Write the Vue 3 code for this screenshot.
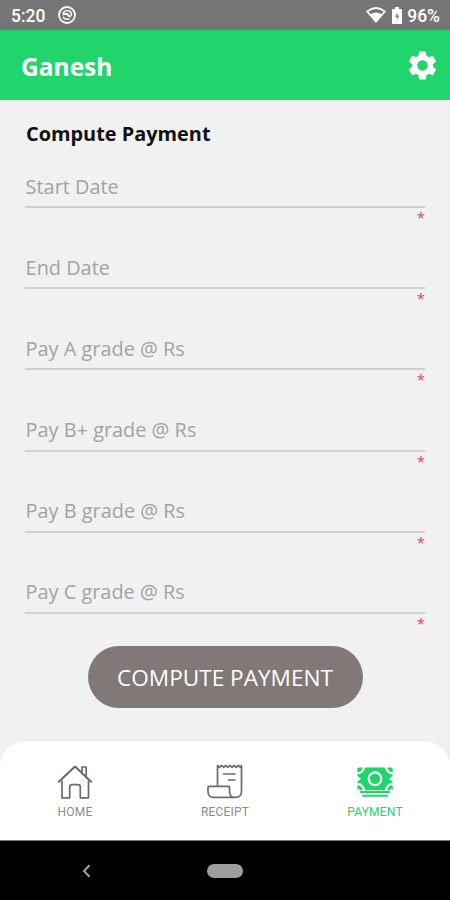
<template>
  <div class="screen">
    <div class="status-bar">
      <span class="clock">5:20</span>
      <svg class="status-app" viewBox="0 0 20 20" fill="none" stroke="#fff">
        <circle cx="10" cy="10" r="8" stroke-width="1.8" />
        <path d="M6 7.800Q8.500 4.800 12 6 15.300 7.600 14.300 11" stroke-width="1.400" />
        <path d="M5.500 9.500Q8.500 8 10.500 9.500L13.500 12" stroke-width="2.200" />
        <path d="M6 12Q8.500 15.300 12.500 13.800" stroke-width="1.400" />
      </svg>
      <svg class="wifi" viewBox="0 0 20 16">
        <path d="M1.200 4.500Q10-2.500 18.800 4.500L10 14.800Z" fill="none" stroke="#fff" stroke-width="1.700" stroke-linejoin="round" />
        <path d="M4.500 7.300Q10 3.500 15.500 7.300L10 14.500Z" fill="#fff" />
      </svg>
      <svg class="battery" viewBox="0 0 10 17">
        <path d="M3 0h4v2h2.200q.8 0 .8.800v13.400q0 .8-.8.800H.8q-.8 0-.8-.8V2.800Q0 2 .8 2H3Z" fill="#fff" />
        <path d="M5.500 5.700 3 9.700h1.800v3.300l2.400-4.200H5.500Z" fill="#757575" />
      </svg>
      <span class="percent">96%</span>
    </div>

    <header class="header">
      <h1>Ganesh</h1>
      <svg class="gear" viewBox="2 2 20 20">
        <path
          fill="#fff"
          d="M19.140 12.940c.04-.3.060-.61.060-.94 0-.32-.02-.64-.07-.94l2.030-1.580c.18-.14.230-.41.120-.61l-1.920-3.320c-.12-.22-.37-.29-.59-.22l-2.390.96c-.5-.38-1.030-.7-1.620-.94l-.36-2.540c-.04-.24-.24-.41-.48-.41h-3.840c-.24 0-.43.170-.47.410l-.36 2.540c-.59.240-1.130.570-1.620.940l-2.390-.96c-.22-.08-.47 0-.59.220L2.740 8.870c-.12.210-.08.470.120.610l2.030 1.580c-.05.300-.09.630-.09.940s.02.640.070.940l-2.030 1.580c-.18.140-.23.410-.12.610l1.920 3.320c.12.220.37.290.59.220l2.390-.96c.5.380 1.030.700 1.620.940l.36 2.540c.05.240.24.410.48.410h3.840c.24 0 .44-.17.470-.41l.36-2.540c.59-.24 1.130-.56 1.620-.94l2.390.96c.22.080.47 0 .59-.22l1.920-3.320c.12-.22.070-.47-.12-.61l-2.010-1.580zM12 15.600c-1.980 0-3.600-1.620-3.600-3.600s1.620-3.600 3.600-3.600 3.600 1.620 3.600 3.600-1.620 3.600-3.600 3.600z"
        />
      </svg>
    </header>

    <main class="content">
      <h2>Compute Payment</h2>
      <div v-for="field in fields" :key="field.key" class="field">
        <input v-model="form[field.key]" type="text" :placeholder="field.label" />
        <span class="required">*</span>
      </div>
      <button class="compute" type="button">COMPUTE PAYMENT</button>
    </main>

    <div class="nav-wrap">
      <nav class="nav">
        <a
          v-for="tab in tabs"
          :key="tab"
          class="tab"
          :class="{ active: tab === activeTab }"
          @click="activeTab = tab"
        >
          <svg v-if="tab === 'HOME'" viewBox="0 0 36 36" fill="none" stroke="currentColor" stroke-width="1.700" stroke-linejoin="round">
            <path d="M5 16.500v17.300h7.700V23q0-2.400 2.400-2.400h5.800q2.400 0 2.400 2.400v10.800h8.200V16.500" />
            <path d="M1.900 17.700 18 2.500l16.100 15.200" stroke-width="2.100" stroke-linecap="round" />
            <path d="M25 8V3h4.200v9.500" />
          </svg>
          <svg v-else-if="tab === 'RECEIPT'" viewBox="0 0 36 36" fill="none" stroke="currentColor" stroke-width="1.700" stroke-linejoin="round">
            <path d="M10.500 22V1.500l2 1.800 2-1.800 2.200 1.800 2-1.800 2.200 1.800 2-1.800 2.200 1.800 2-1.800 2.200 1.800 2-1.800 2.200 1.800 1-1.800V27.500q0 5.800-6 5.800H6.800Q1 33.300 1 27.500v-4.200q0-1 1-1h19.500q1 0 1 1v4.200q0 5.800 5.200 5.800" />
            <path d="M16 10h12.500M21 16h7.500" />
          </svg>
          <svg v-else viewBox="0 0 36 36">
            <rect x=".3" y="3.500" width="35.400" height="22.800" rx="1.500" fill="currentColor" />
            <g fill="none" stroke="#fff" stroke-width="2.200">
              <circle cx="18" cy="14.700" r="6.300" />
              <path d="M7 3A7 7 0 0 1 0 9.500M29 3A7 7 0 0 0 36 9.500M0 19.800a7 7 0 0 1 7 7M36 19.800a7 7 0 0 0-7 7" />
            </g>
            <path d="M0 11.500l4 3.200L0 18ZM36 11.500l-4 3.200L36 18ZM1 26.800v-2.800l2.500 2.800ZM35 26.800v-2.800l-2.500 2.800Z" fill="#fff" />
            <path d="M3.500 28h29M6 31.800h24" stroke="currentColor" stroke-width="1.900" stroke-linecap="round" />
          </svg>
          <span>{{ tab }}</span>
        </a>
      </nav>
    </div>

    <div class="system-bar">
      <svg class="back" viewBox="0 0 9 14">
        <path d="M7.500 1.200 2 7l5.500 5.800" fill="none" stroke="#a0a0a0" stroke-width="2" />
      </svg>
      <div class="pill"></div>
    </div>
  </div>
</template>

<script setup>
import { reactive, ref } from "vue";

const fields = [
  { key: "startDate", label: "Start Date" },
  { key: "endDate", label: "End Date" },
  { key: "gradeA", label: "Pay A grade @ Rs" },
  { key: "gradeBPlus", label: "Pay B+ grade @ Rs" },
  { key: "gradeB", label: "Pay B grade @ Rs" },
  { key: "gradeC", label: "Pay C grade @ Rs" },
];

const form = reactive({
  startDate: "",
  endDate: "",
  gradeA: "",
  gradeBPlus: "",
  gradeB: "",
  gradeC: "",
});

const tabs = ["HOME", "RECEIPT", "PAYMENT"];
const activeTab = ref("PAYMENT");
</script>

<style>
body {
  margin: 0;
}
</style>

<style scoped>
* {
  box-sizing: border-box;
}

.screen {
  display: flex;
  flex-direction: column;
  width: 450px;
  height: 900px;
  overflow: hidden;
  background-color: #f1f1f1;
  font-family: "Open Sans", sans-serif;
}

.status-bar {
  display: flex;
  align-items: center;
  flex: 0 0 30px;
  padding: 2px 10px 0 11px;
  background-color: #757575;
  color: #fff;
  font-family: Roboto, sans-serif;
  font-size: 17.5px;
  font-weight: 500;
}

.status-app {
  width: 20px;
  height: 20px;
  margin-left: 12px;
  margin-top: -2px;
}

.wifi {
  width: 20px;
  height: 16px;
  margin-top: -2px;
  margin-left: auto;
}

.battery {
  width: 10px;
  height: 17px;
  margin: -2px 5px 0 6px;
}

.header {
  display: flex;
  align-items: center;
  justify-content: space-between;
  flex: 0 0 70px;
  padding: 0 13px 0 21px;
  background-color: #20d56c;
}

h1 {
  margin: 2px 0 0;
  color: #fff;
  font-size: 24.5px;
  font-weight: 700;
}

.gear {
  width: 29px;
  height: 29px;
}

.content {
  display: flex;
  flex-direction: column;
  flex: 1;
  padding: 20px 25px 0;
}

h2 {
  margin: 0 0 11px;
  padding-left: 1px;
  color: #111;
  font-size: 19.9px;
  font-weight: 700;
  line-height: 27px;
}

.field {
  display: flex;
  flex-direction: column;
  flex: 0 0 81.2px;
}

input {
  width: 100%;
  height: 50px;
  padding: 8px 0 0 0.6px;
  border: 0;
  border-bottom: 2px solid #d0d0d0;
  outline: 0;
  background: none;
  color: #333;
  font-family: inherit;
  font-size: 19.9px;
}

input::placeholder {
  color: #a3a3a3;
  opacity: 1;
}

.required {
  align-self: flex-end;
  color: #d8485c;
  font-size: 15px;
  line-height: 19px;
}

.compute {
  align-self: center;
  width: 275px;
  height: 62px;
  margin-top: 1px;
  padding: 0;
  border: 0;
  border-radius: 31px;
  background-color: #807978;
  color: #fff;
  font-family: inherit;
  font-size: 22.6px;
  white-space: nowrap;
}

.nav-wrap {
  flex: 0 0 99px;
}

.nav {
  display: flex;
  height: 100%;
  border-radius: 25px 25px 0 0;
  background-color: #fff;
  box-shadow: 0 0 3px rgba(0, 0, 0, 0.06);
}

.tab {
  display: flex;
  flex: 1;
  flex-direction: column;
  align-items: center;
  padding-top: 23px;
  color: #6e6a6a;
  cursor: pointer;
}

.tab svg {
  width: 36px;
  height: 36px;
}

.tab span {
  margin-top: 4px;
  color: #8c8c8c;
  font-family: Roboto, sans-serif;
  font-size: 12px;
  letter-spacing: 0.2px;
  line-height: 16px;
}

.tab.active,
.tab.active span {
  color: #20d56c;
}

.system-bar {
  display: grid;
  grid-template-columns: 1fr 36px 1fr;
  align-items: center;
  flex: 0 0 60px;
  border-top: 1px solid #777;
  background-color: #000;
}

.back {
  width: 9px;
  height: 14px;
  margin-left: 82px;
}

.pill {
  height: 14px;
  border-radius: 7px;
  background-color: #9e9e9e;
}
</style>
